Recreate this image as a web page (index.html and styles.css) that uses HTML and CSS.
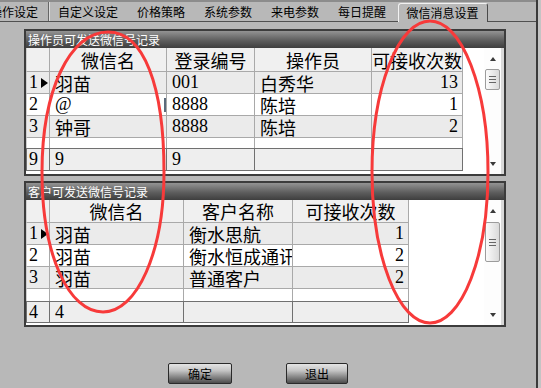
FILE: index.html
```html
<!DOCTYPE html>
<html lang="zh-CN">
<head>
<meta charset="utf-8">
<title>微信消息设置</title>
<link rel="stylesheet" href="styles.css">
</head>
<body>
<div class="window">
  <div class="topband"></div>
  <div class="tabs">
    <div class="tab first">操作设定</div>
    <div class="tab">自定义设定</div>
    <div class="tab">价格策略</div>
    <div class="tab">系统参数</div>
    <div class="tab">来电参数</div>
    <div class="tab">每日提醒</div>
    <div class="tab active">微信消息设置</div>
  </div>
  <div class="content">
    <section class="panel p1">
      <div class="panel-title">操作员可发送微信号记录</div>
      <div class="panel-body">
        <div class="grid g1">
          <div class="row hdr"><div class="c ind"></div><div class="c">微信名</div><div class="c">登录编号</div><div class="c">操作员</div><div class="c">可接收次数</div></div>
          <div class="row odd"><div class="c ind">1<span class="cur"></span></div><div class="c">羽苗</div><div class="c">001</div><div class="c">白秀华</div><div class="c num">13</div></div>
          <div class="row even"><div class="c ind">2</div><div class="c edit">@</div><div class="c">8888</div><div class="c">陈培</div><div class="c num">1</div></div>
          <div class="row odd"><div class="c ind">3</div><div class="c">钟哥</div><div class="c">8888</div><div class="c">陈培</div><div class="c num">2</div></div>
          <div class="row empty"><div class="c ind"></div><div class="c"></div><div class="c"></div><div class="c"></div><div class="c"></div></div>
          <div class="row foot"><div class="c ind">9</div><div class="c">9</div><div class="c">9</div><div class="c"></div><div class="c"></div></div>
        </div>
        <div class="fill"></div>
        <div class="vscroll">
          <div class="arrow up"></div>
          <div class="thumb t1"></div>
          <div class="spacer"></div>
          <div class="arrow down"></div>
        </div>
      </div>
    </section>
    <section class="panel p2">
      <div class="panel-title">客户可发送微信号记录</div>
      <div class="panel-body">
        <div class="grid g2">
          <div class="row hdr"><div class="c ind"></div><div class="c">微信名</div><div class="c">客户名称</div><div class="c">可接收次数</div></div>
          <div class="row odd"><div class="c ind">1<span class="cur"></span></div><div class="c">羽苗</div><div class="c">衡水思航</div><div class="c num">1</div></div>
          <div class="row even"><div class="c ind">2</div><div class="c">羽苗</div><div class="c">衡水恒成通讯</div><div class="c num">2</div></div>
          <div class="row odd"><div class="c ind">3</div><div class="c">羽苗</div><div class="c">普通客户</div><div class="c num">2</div></div>
          <div class="row empty"><div class="c ind"></div><div class="c"></div><div class="c"></div><div class="c"></div></div>
          <div class="row foot"><div class="c ind">4</div><div class="c">4</div><div class="c"></div><div class="c"></div></div>
        </div>
        <div class="fill"></div>
        <div class="vscroll">
          <div class="arrow up"></div>
          <div class="thumb t2"></div>
          <div class="spacer"></div>
          <div class="arrow down"></div>
        </div>
      </div>
    </section>
    <div class="buttons">
      <button class="btn btn-ok">确定</button>
      <button class="btn btn-exit">退出</button>
    </div>
  </div>
  <svg class="marks" width="541" height="388" viewBox="0 0 541 388">
    <path d="M108 32 C144 32 164 86 164 172 C164 252 137 312 103 312 C69 312 42 256 42 172 C42 90 70 32 108 32 Z" fill="none" stroke="#f73a3a" stroke-width="3"/>
    <ellipse cx="430" cy="172" rx="58" ry="151" fill="none" stroke="#f73a3a" stroke-width="3"/>
  </svg>
</div>
</body>
</html>
```
FILE: styles.css
```css
* { box-sizing: border-box; }
html, body { margin: 0; padding: 0; }
body {
  width: 541px;
  height: 388px;
  overflow: hidden;
  background: #c4c4c4;
  font-family: "Noto Sans CJK SC", sans-serif;
}
.window {
  position: relative;
  width: 538px;
  height: 388px;
  background: #b8b8b8;
  border-right: 2px solid #3a3a3a;
  display: flex;
  flex-direction: column;
}
.topband { height: 2px; background: #8c8c8c; flex: none; }
.tabs {
  display: flex;
  align-items: flex-end;
  height: 20px;
  margin-left: -19.5px;
  border-bottom: 1px solid #505050;
  flex: none;
  font-size: 12px;
  color: #000;
}
.tab {
  height: 19px;
  line-height: 19px;
  padding: 0 9.5px;
  white-space: nowrap;
}
.tab.first {
  border-right: 1px solid #666;
  box-shadow: 1px 0 0 #dcdcdc;
}
.tab.active {
  margin-left: 2px;
  margin-bottom: -1px;
  padding: 0 8px;
  line-height: 18px;
  background: #b8b8b8;
  border: 1px solid;
  border-color: #f2f2f2 #4a4a4a transparent #f2f2f2;
  border-bottom: 0;
  border-radius: 3px 3px 0 0;
}
.content {
  flex: 1;
  display: flex;
  flex-direction: column;
  padding: 7px 0 0 24px;
}
.panel {
  width: 482px;
  flex: none;
  border: 2px solid #3c3c3c;
  background: #fff;
}
.panel + .panel { margin-top: 5px; }
.panel-title {
  height: 17px;
  line-height: 17px;
  padding-left: 2px;
  color: #fff;
  font-size: 12px;
  background: linear-gradient(#939393, #5e5e5e 55%, #3e3e3e);
  white-space: nowrap;
}
.panel-body { display: flex; background: #fff; }
.p1 .panel-body { height: 126px; }
.p2 .panel-body { height: 125px; }

.grid {
  display: grid;
  align-content: start;
  font-family: "Liberation Serif", "Noto Sans CJK SC", serif;
  font-size: 18px;
  color: #000;
}
.g1 {
  grid-template-columns: 24px 117px 88px 117px 91px;
  grid-template-rows: 24px 22px 22px 22px 10px 23px;
}
.g2 {
  grid-template-columns: 24px 134px 109px 116px;
  grid-template-rows: 23px 22px 22px 22px 12px 22px;
}
.row { display: contents; }
.c {
  border-right: 1px solid #a9a9a9;
  border-bottom: 1px solid #a9a9a9;
  padding: 0 4px 0 5px;
  white-space: nowrap;
  overflow: hidden;
  display: flex;
  align-items: center;
}
.c.ind {
  padding: 0 0 0 2px;
  border-left: 1px solid #cfcfcf;
}
.hdr > .c { background: #f0f0f0; justify-content: center; padding: 0; }
.odd > .c { background: #ebebeb; }
.even > .c { background: #fff; }
.empty > .c { background: #fff; border-bottom: 0; }
.foot > .c {
  background: #eeeeee;
  border-top: 1px solid #707070;
  border-bottom: 1px solid #707070;
  border-right-color: #707070;
}
.foot > .c.ind { border-left-color: #707070; }
.c.num { justify-content: flex-end; padding-right: 4px; }
.cur {
  width: 0;
  height: 0;
  margin-left: 3px;
  border-left: 7px solid #000;
  border-top: 5.5px solid transparent;
  border-bottom: 5.5px solid transparent;
}
.c.edit { justify-content: space-between; padding-right: 0; }
.c.edit::after {
  content: "";
  width: 2px;
  height: 14px;
  background: #5b6b7c;
}

.fill { flex: 1; background: #fff; }
.vscroll {
  width: 20px;
  flex: none;
  border-right: 3px solid #d8d8d8;
  padding: 2px 0;
  display: flex;
  flex-direction: column;
  align-items: center;
  background: #fdfdfd;
}
.arrow {
  width: 17px;
  height: 17px;
  flex: none;
  display: flex;
  align-items: center;
  justify-content: center;
}
.arrow.up::before {
  content: "";
  border-left: 3.5px solid transparent;
  border-right: 3.5px solid transparent;
  border-bottom: 4px solid #3a3a3a;
}
.arrow.down::before {
  content: "";
  border-left: 3.5px solid transparent;
  border-right: 3.5px solid transparent;
  border-top: 4px solid #3a3a3a;
}
.thumb {
  width: 15px;
  flex: none;
  margin-top: 2px;
  border: 1px solid #9c9c9c;
  border-radius: 2px;
  background: linear-gradient(90deg, #fbfbfb, #dadada);
  display: flex;
  align-items: center;
  justify-content: center;
}
.thumb::before {
  content: "";
  width: 7px;
  height: 7px;
  background: repeating-linear-gradient(#666 0 1px, transparent 1px 3px);
}
.t1 { height: 21px; }
.t2 { height: 40px; margin-top: 3px; }
.spacer { flex: 1; }

.buttons {
  display: flex;
  gap: 54px;
  margin-top: 36px;
  padding-left: 144px;
}
.btn {
  height: 21px;
  padding: 0;
  font-family: "Noto Sans CJK SC", sans-serif;
  font-size: 12px;
  line-height: 19px;
  color: #000;
  border: 1px solid #2a2a2a;
  border-radius: 2px;
  background: linear-gradient(#e4e4e4 0%, #c4c4c4 35%, #8c8c8c 65%, #4c4c4c 100%);
}
.btn-ok { width: 64px; }
.btn-exit { width: 62px; }

.marks {
  position: absolute;
  left: 0;
  top: 0;
  pointer-events: none;
}
```
